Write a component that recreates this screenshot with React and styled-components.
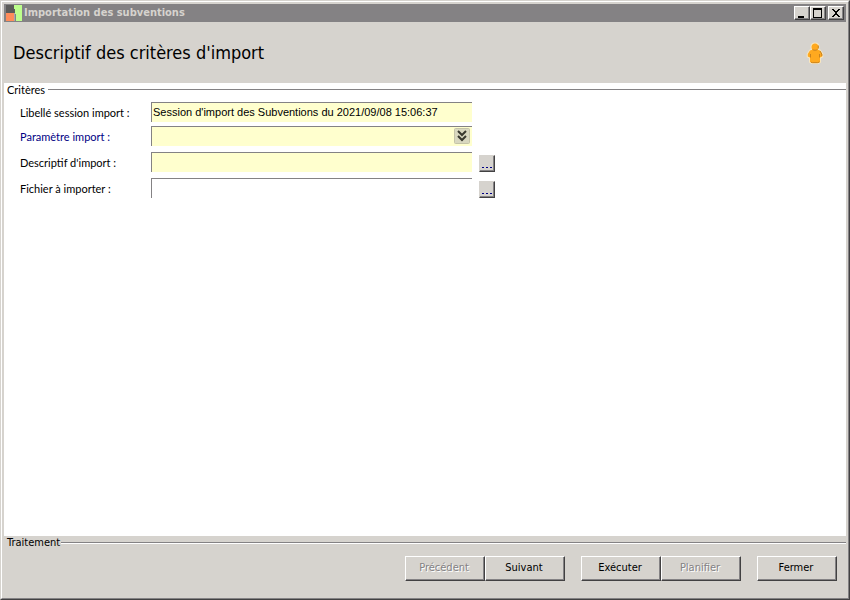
import React from "react";
import styled, { createGlobalStyle, css } from "styled-components";

const face = "#d6d3ce";
const shade = "#848284";
const dark = "#424142";
const uiFont = '"DejaVu Sans Condensed", "DejaVu Sans", sans-serif';
const labelFont = 'Lato, "Liberation Sans", sans-serif';
const fieldFont = '"Liberation Sans", Arial, sans-serif';

const GlobalStyle = createGlobalStyle`
  * { box-sizing: border-box; }
  body { margin: 0; background: ${face}; }
  button, input, select { font: inherit; color: inherit; margin: 0; border-radius: 0; }
`;

const Frame = styled.div`
  min-height: 100vh;
  display: flex;
  background: ${face};
  border: 1px solid;
  border-color: ${face} ${dark} ${dark} ${face};
`;

const Window = styled.div`
  flex: 1;
  min-width: 0;
  display: flex;
  flex-direction: column;
  padding: 2px 2px 0;
  border: 1px solid;
  border-color: #fff ${shade} ${shade} #fff;
  font: 11px/14px ${uiFont};
  color: #000;
`;

const TitleBar = styled.header`
  display: flex;
  align-items: center;
  height: 18px;
  padding: 0 2px;
  gap: 2px;
  background: ${shade};
  color: ${face};
`;

const WindowTitle = styled.span`
  flex: 1;
  font-weight: 700;
`;

const WindowControls = styled.div`
  display: flex;
`;

const raised = css`
  background: ${face};
  border: 1px solid;
  border-color: #fff ${dark} ${dark} #fff;
  box-shadow: inset -1px -1px 0 ${shade};
`;

const ControlButton = styled.button`
  ${raised}
  display: flex;
  width: 16px;
  height: 14px;
  padding: 0;
  color: #000;
  margin-left: ${(p) => (p.$apart ? 2 : 0)}px;
`;

const Banner = styled.div`
  display: flex;
  align-items: center;
  justify-content: space-between;
  height: 61px;
  padding: 0 22px 0 9px;
`;

const Heading = styled.h1`
  margin: 0;
  font: 400 18px/22px ${uiFont};
`;

const Criteria = styled.main`
  flex: 1;
  background: #fff;
`;

const Section = styled.h2`
  display: flex;
  align-items: center;
  gap: ${(p) => (p.$etched ? 1 : 3)}px;
  margin: 0;
  padding-left: 3px;
  font: 400 11px/14px ${(p) => (p.$etched ? uiFont : labelFont)};
  line-height: ${(p) => (p.$etched ? 14 : 13)}px;

  &::after {
    content: "";
    flex: 1;
    border-top: 1px solid ${shade};
    border-bottom: ${(p) => (p.$etched ? "1px solid #fff" : "0")};
  }
`;

const Form = styled.form`
  display: flex;
  flex-direction: column;
  padding: 6px 16px;
`;

const Row = styled.div`
  display: grid;
  grid-template-columns: 131px minmax(0, 321px) 23px;
  align-items: start;
  height: ${(p) => (p.$tight ? 24 : 26)}px;
`;

const Label = styled.label`
  font: 11px/22px ${labelFont};
  color: ${(p) => (p.$link ? "#000084" : "#000")};
`;

const field = css`
  display: block;
  width: 100%;
  height: 20px;
  padding: 0 1px 2px;
  border: 0 solid ${shade};
  border-width: 1px 0 0 1px;
  background: ${(p) => (p.$required ? "#ffffce" : "#fff")};
  font-family: ${fieldFont};
  outline: none;
`;

const TextField = styled.input`
  ${field}
`;

const SelectBox = styled.div`
  position: relative;
`;

const Select = styled.select`
  ${field}
  appearance: none;
`;

const DropMark = styled.svg`
  position: absolute;
  top: 2px;
  right: 2px;
  pointer-events: none;
`;

const BrowseButton = styled.button`
  ${raised}
  display: flex;
  width: 16px;
  height: 17px;
  margin: 3px 0 0 7px;
  padding: 0;
  border-color: ${face} ${dark} ${dark} ${face};
`;

const Footer = styled.footer`
  min-height: 62px;
`;

const Actions = styled.div`
  display: flex;
  justify-content: flex-end;
  gap: 16px;
  padding: 6px 9px 0;
`;

const Group = styled.div`
  display: flex;
`;

const ActionButton = styled.button`
  ${raised}
  width: 80px;
  height: 25px;
  padding: 0 2px 1px 0;

  &:disabled {
    color: ${shade};
    text-shadow: 1px 1px 0 #fff;
  }
`;

function AppIcon() {
  return (
    <svg width="16" height="16" aria-hidden="true" shapeRendering="crispEdges">
      <rect width="9" height="8" fill="#5c5b59" />
      <rect y="8" width="9" height="8" fill="#ff8c5a" />
      <path d="M8 0h8v16H10V9H9V4H8z" fill="#bdff8c" />
      <path d="M8 8h1v8H8z" fill="#a7aab0" />
    </svg>
  );
}

function PersonIcon() {
  return (
    <svg width="18" height="22" viewBox="0 0 18 22" aria-hidden="true">
      <path
        d="M9 1.500C7 1.500 5.500 2.800 5.500 5c0 1 .3 2 1 2.700L4 8.500 1.800 12v2.500L4 15.500V20l2 1h6l2-1v-4.500l2.200-1V12L14 8.500l-2.500-.8c.7-.7 1-1.700 1-2.700C12.500 2.800 11 1.500 9 1.500z"
        fill="#ffa91f"
        stroke="#f8e6bf"
        strokeWidth="2"
      />
      <path
        d="M9 1.500C7 1.500 5.500 2.800 5.500 5c0 1 .3 2 1 2.700L4 8.500 1.800 12v2.500L4 15.500V20l2 1h6l2-1v-4.500l2.200-1V12L14 8.500l-2.500-.8c.7-.7 1-1.700 1-2.700C12.500 2.800 11 1.500 9 1.500z"
        fill="#ffa91f"
      />
      <path d="M6.500 7.500c1.500 1 3.500 1 5 0M4.500 12v3.500M13.500 12v3.500M12.300 3.500v3M5 20.200l1.500.5h5l2-.7M14 9l1.800 3v2" fill="none" stroke="#c8821f" strokeWidth="1" />
    </svg>
  );
}

const controlGlyphs = {
  Réduire: <path d="M3 9h6v2H3z" fill="currentColor" />,
  Agrandir: <path d="M2 1h9v10H2zM3 3v7h7V3z" fill="currentColor" fillRule="evenodd" />,
  Fermer: <path d="M3 2h2v1h1v1h2V3h1V2h2v1h-1v1H9v1H8v2h1v1h1v1h1v1H9V9H8V8H6v1H5v1H3V9h1V8h1V7h1V5H5V4H4V3H3z" fill="currentColor" />,
};

function WindowControl({ name, apart }) {
  return (
    <ControlButton type="button" aria-label={name} $apart={apart}>
      <svg width="13" height="12" shapeRendering="crispEdges" aria-hidden="true">
        {controlGlyphs[name]}
      </svg>
    </ControlButton>
  );
}

function Browse({ label }) {
  return (
    <BrowseButton type="button" aria-label={label}>
      <svg width="14" height="15" shapeRendering="crispEdges" aria-hidden="true">
        <path d="M2 11h2v1H2zM6 11h2v1H6zM10 11h2v1h-2z" fill="#000084" />
      </svg>
    </BrowseButton>
  );
}

export default function App() {
  return (
    <>
      <GlobalStyle />
      <Frame>
        <Window>
          <TitleBar>
            <AppIcon />
            <WindowTitle>Importation des subventions</WindowTitle>
            <WindowControls>
              <WindowControl name="Réduire" />
              <WindowControl name="Agrandir" />
              <WindowControl name="Fermer" apart />
            </WindowControls>
          </TitleBar>
          <Banner>
            <Heading>Descriptif des critères d'import</Heading>
            <PersonIcon />
          </Banner>
          <Criteria>
            <Section>Critères</Section>
            <Form onSubmit={(e) => e.preventDefault()}>
              <Row $tight>
                <Label htmlFor="session">Libellé session import :</Label>
                <TextField
                  id="session"
                  $required
                  defaultValue="Session d'import des Subventions du 2021/09/08 15:06:37"
                />
              </Row>
              <Row>
                <Label htmlFor="parametre" $link>Paramètre import :</Label>
                <SelectBox>
                  <Select id="parametre" $required defaultValue="">
                    <option value="" />
                  </Select>
                  <DropMark width="16" height="16" aria-hidden="true">
                    <rect x=".5" y=".5" width="15" height="15" rx="1" fill="#d9d8c0" stroke="#c5c4a8" />
                    <path d="M4 3l4 4 4-4M4 8l4 4 4-4" fill="none" stroke="#39392f" strokeWidth="2" />
                  </DropMark>
                </SelectBox>
              </Row>
              <Row>
                <Label htmlFor="descriptif">Descriptif d'import :</Label>
                <TextField id="descriptif" $required />
                <Browse label="Parcourir les descriptifs" />
              </Row>
              <Row>
                <Label htmlFor="fichier">Fichier à importer :</Label>
                <TextField id="fichier" />
                <Browse label="Parcourir les fichiers" />
              </Row>
            </Form>
          </Criteria>
          <Footer>
            <Section $etched>Traitement</Section>
            <Actions>
              <Group>
                <ActionButton type="button" disabled>Précédent</ActionButton>
                <ActionButton type="button">Suivant</ActionButton>
              </Group>
              <Group>
                <ActionButton type="button">Exécuter</ActionButton>
                <ActionButton type="button" disabled>Planifier</ActionButton>
              </Group>
              <ActionButton type="button">Fermer</ActionButton>
            </Actions>
          </Footer>
        </Window>
      </Frame>
    </>
  );
}
